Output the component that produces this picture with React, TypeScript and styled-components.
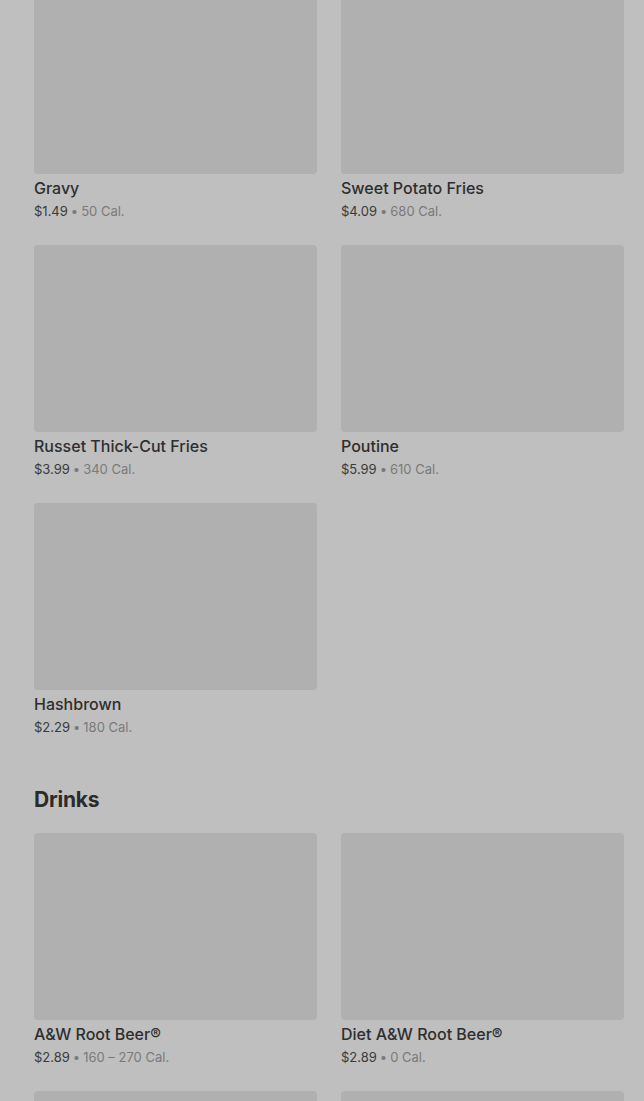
import styled, { createGlobalStyle } from "styled-components";

const GlobalStyle = createGlobalStyle`
  body {
    margin: 0;
    background: #bfbfbf;
    font-family: Inter, "Noto Sans", "Liberation Sans", sans-serif;
    color: #2e2e2e;
  }
`;

const Page = styled.div`
  padding: 0 20px 0 34px;
  margin-top: -13px;
`;

const Section = styled.section`
  & + & {
    margin-top: 50px;
  }
`;

const SectionTitle = styled.h2`
  margin: 0 0 19px;
  font-size: 21px;
  line-height: 28px;
  font-weight: 700;
  color: #2b2b2b;
  letter-spacing: -0.2px;
`;

const ItemGrid = styled.div`
  display: grid;
  grid-template-columns: 283px 283px;
  column-gap: 24px;
  row-gap: 25px;
`;

const Item = styled.div`
  display: flex;
  flex-direction: column;
`;

const Thumb = styled.div`
  height: 187px;
  background: #b0b0b0;
  border-radius: 4px;
`;

const Name = styled.div`
  margin-top: 4px;
  font-size: 16px;
  line-height: 20px;
  height: 20px;
  font-weight: 500;
  color: #2e2e2e;
`;

const Meta = styled.div`
  margin-top: 4px;
  font-size: 13px;
  line-height: 18px;
  height: 18px;
  color: #3a3a3a;
`;

const Cal = styled.span`
  color: #7a7a7a;
`;

const Dot = styled.span`
  color: #7a7a7a;
  margin: 0 3px;
`;

interface MenuItem {
  name: string;
  price: string;
  cal: string;
}

const sides: MenuItem[] = [
  { name: "Gravy", price: "$1.49", cal: "50 Cal." },
  { name: "Sweet Potato Fries", price: "$4.09", cal: "680 Cal." },
  { name: "Russet Thick-Cut Fries", price: "$3.99", cal: "340 Cal." },
  { name: "Poutine", price: "$5.99", cal: "610 Cal." },
  { name: "Hashbrown", price: "$2.29", cal: "180 Cal." },
];

const drinks: MenuItem[] = [
  { name: "A&W Root Beer®", price: "$2.89", cal: "160 – 270 Cal." },
  { name: "Diet A&W Root Beer®", price: "$2.89", cal: "0 Cal." },
  { name: "", price: "", cal: "" },
  { name: "", price: "", cal: "" },
];

function Card({ item }: { item: MenuItem }) {
  return (
    <Item>
      <Thumb />
      {item.name && (
        <>
          <Name>{item.name}</Name>
          <Meta>
            {item.price}
            <Dot>•</Dot>
            <Cal>{item.cal}</Cal>
          </Meta>
        </>
      )}
    </Item>
  );
}

export default function App() {
  return (
    <>
      <GlobalStyle />
      <Page>
        <Section>
          <ItemGrid>
            {sides.map((el, i) => (
              <Card key={i} item={el} />
            ))}
          </ItemGrid>
        </Section>
        <Section>
          <SectionTitle>Drinks</SectionTitle>
          <ItemGrid>
            {drinks.map((el, i) => (
              <Card key={i} item={el} />
            ))}
          </ItemGrid>
        </Section>
      </Page>
    </>
  );
}
